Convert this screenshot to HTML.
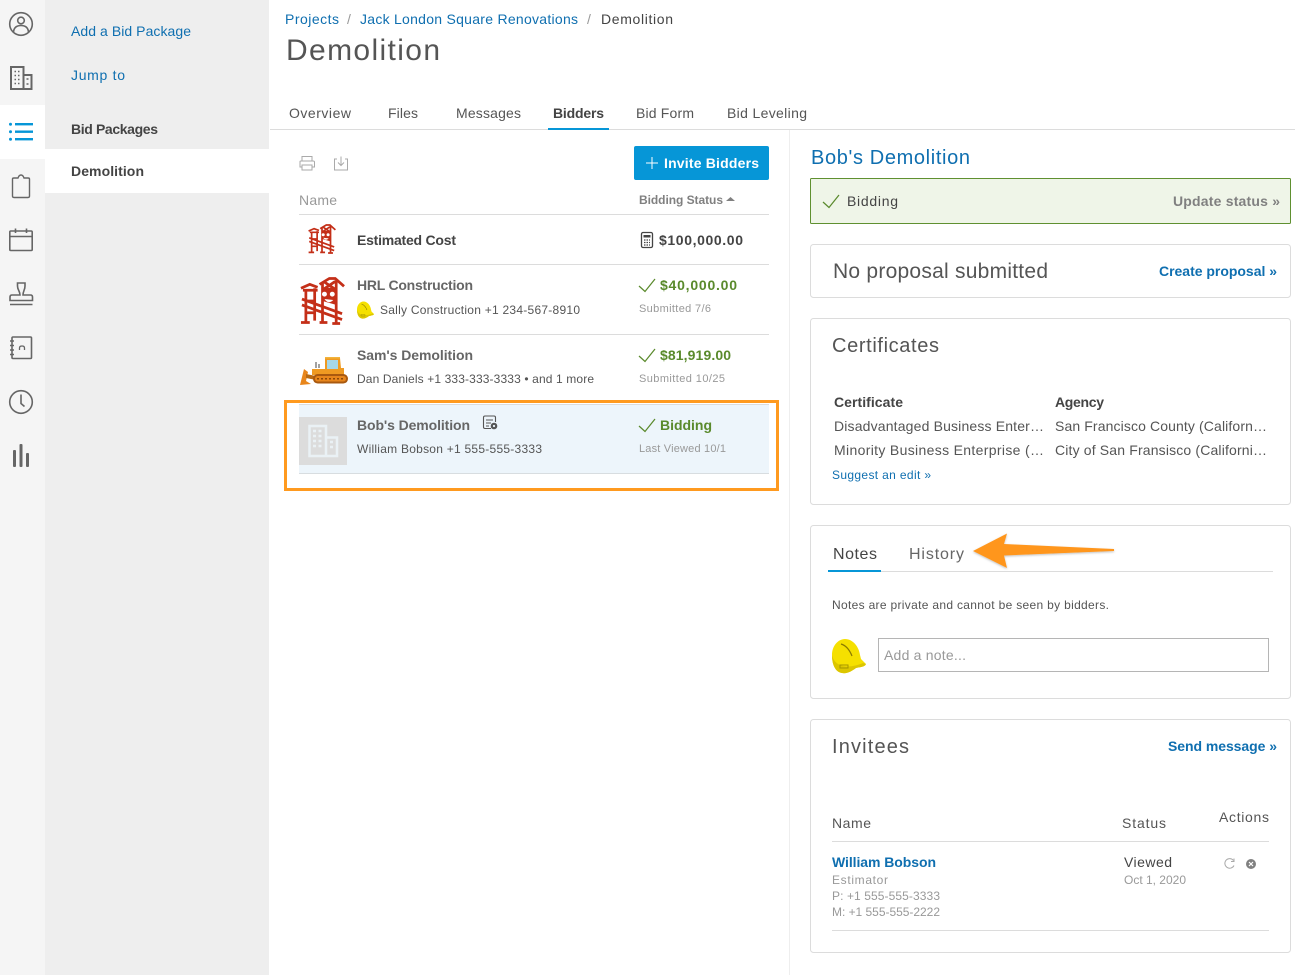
<!DOCTYPE html>
<html lang="en"><head><meta charset="utf-8"><title>Demolition</title>
<style>
html,body{margin:0;padding:0;background:#fff;width:1306px;height:975px;overflow:hidden}
svg{display:block}
text{font-family:"Liberation Sans",sans-serif;font-size:14px;fill:#555}
.b{font-weight:700}
.blue{fill:#0f6fb0}
.s{font-size:12px}
.gr{fill:#999}
.grn{fill:#5a8a2c;font-weight:700}
.ic{fill:none;stroke:#666;stroke-width:1.6}
.ic2{fill:none;stroke:#aaa;stroke-width:1}
.ck{fill:none;stroke:#5a8a2c;stroke-width:1.25}
.card{fill:#fff;stroke:#dcdcdc;stroke-width:1}
.ln{stroke:#dcdcdc;stroke-width:1}
</style></head><body>
<svg width="1306" height="975" viewBox="0 0 1306 975" xmlns="http://www.w3.org/2000/svg">
<defs>
<symbol id="tower" viewBox="0 0 46 48">
<g fill="none" stroke="#c42f18" stroke-width="2.8">
<path d="M1 11 L10 7 L18 10 M3 13 H18 M6 12 V46 M15 11 V44 M6 24 H15 M6 36 H15 M1 46 H10"/>
<path d="M20 7 L30 1 L36 1 L45 9 M23 5 V47 M37 3 V47 M23 12 H37 M24 4 L36 12 M36 4 L24 12 M20 46 H28 M33 47 H41"/>
<path d="M2 22 L43 37 M2 28 L43 43"/>
</g>
<path d="M23 12 H37 V28 L23 24 Z" fill="#c42f18"/>
<circle cx="25" cy="17" r="2.500" fill="#fff"/><circle cx="33" cy="17" r="2.500" fill="#fff"/>
<path d="M25 22 Q29 28 34 23 Z" fill="#fff"/>
</symbol>
<symbol id="helmet" viewBox="0 0 34 36">
<path d="M0 17 C0 8 6 1 13 1 C21 1 27 9 28 17 L29 21 L34 26 C33 29 28 29 24 30 C20 33 15 36 10 35 C3 34 0 26 0 17Z" fill="#f5e000"/>
<path d="M0 17 C0 26 3 34 10 35 C15 36 20 33 24 30 C28 29 33 29 34 26 L31 25 C24 28 14 30 8 27 C3 25 1 21 0 17Z" fill="#dcc600"/>
<path d="M9 6 Q16 8 20 18" fill="none" stroke="#8a7a00" stroke-width="1.200"/>
<path d="M8 27 H16 V30 H8Z" fill="none" stroke="#a59500" stroke-width="1"/>
</symbol>
<filter id="sh" x="-5%" y="-30%" width="110%" height="160%"><feDropShadow dx="0" dy="1" stdDeviation="1" flood-color="#000" flood-opacity=".25"/></filter>
</defs>

<rect x="0" y="0" width="45" height="975" fill="#f5f5f5"/>
<rect x="45" y="0" width="224" height="975" fill="#eeeeee"/>
<rect x="0" y="105" width="45" height="54" fill="#fff"/>
<rect x="45" y="149" width="224" height="44" fill="#fff"/>

<g class="ic">
<circle cx="21" cy="24" r="11.300"/><circle cx="21" cy="20.500" r="3.300"/><path d="M13.500 32 C14 27 17 25.500 21 25.500 C25 25.500 28 27 28.500 32"/>
<path d="M11 89 V67 H23.500 V89 Z M23.500 75 H31.500 V89 H23.500" stroke-width="2"/>
<path d="M14.500 71.500 h1.500 m2 0 h1.500 M14.500 75.500 h1.500 m2 0 h1.500 M14.500 79.500 h1.500 m2 0 h1.500 M14.500 83.500 h1.500 m2 0 h1.500 M26.500 79 h2 M26.500 84 h2"/>
<path d="M12.500 179 Q12.500 178 14 178 H18 Q19 175 21 175 Q23 175 24 178 H28 Q29.500 178 29.500 179 V196 Q29.500 197.500 28 197.500 H14 Q12.500 197.500 12.500 196 Z" stroke-width="1.400"/>
<rect x="9.800" y="231" width="22.400" height="19.500" rx="1"/><path d="M9.800 236.500 H32 M15.500 228.500 V233 M26.500 228.500 V233"/>
<path d="M17.500 283 H25 V286 C25 290 23 291 23 295 H30.500 Q32.500 295 32.500 297 V300.500 H10 V297 Q10 295 12 295 H20 C20 291 17.500 290 17.500 286 Z M10 304.500 H32.500"/>
<rect x="12" y="337" width="19.500" height="21.500" rx="1"/><path d="M10 341 H14 M10 345.500 H14 M10 350 H14 M10 354.500 H14"/><path d="M19.500 350 V348 Q19.500 346 22 346 Q24.500 346 24.500 348 V350" stroke-width="1.300"/>
<circle cx="21" cy="402" r="11.300"/><path d="M21 394.500 V403.500 L24.500 406.500"/>
</g>
<g fill="#666"><rect x="13" y="450" width="3" height="17" rx="1"/><rect x="19.500" y="444" width="3" height="23" rx="1"/><rect x="26" y="453" width="3" height="14" rx="1"/></g>
<g fill="#0696d7"><rect x="15" y="123" width="18" height="2.400"/><rect x="15" y="130.500" width="18" height="2.400"/><rect x="15" y="138" width="18" height="2.400"/><circle cx="10.500" cy="124.200" r="1.500"/><circle cx="10.500" cy="131.700" r="1.500"/><circle cx="10.500" cy="139.200" r="1.500"/></g>

<text x="71" y="36" class="blue" textLength="120">Add a Bid Package</text>
<text x="71" y="80" class="blue" textLength="54">Jump to</text>
<text x="71" y="134" class="b" style="fill:#444" textLength="87">Bid Packages</text>
<text x="71" y="176" class="b" style="fill:#444" textLength="73">Demolition</text>

<text x="285" y="24" class="blue" textLength="54">Projects</text>
<text x="347" y="24" class="gr">/</text>
<text x="360" y="24" class="blue" textLength="218">Jack London Square Renovations</text>
<text x="587" y="24" class="gr">/</text>
<text x="601" y="24" style="fill:#444" textLength="72">Demolition</text>
<text x="286" y="60" style="font-size:30px" textLength="154">Demolition</text>

<text x="289" y="118" textLength="62">Overview</text>
<text x="388" y="118" textLength="30">Files</text>
<text x="456" y="118" textLength="65">Messages</text>
<text x="553" y="118" class="b" style="fill:#444" textLength="51">Bidders</text>
<text x="636" y="118" textLength="58">Bid Form</text>
<text x="727" y="118" textLength="80">Bid Leveling</text>
<line x1="270" y1="129.500" x2="1295" y2="129.500" class="ln"/>
<rect x="548" y="128" width="61" height="2" fill="#0696d7"/>
<line x1="789.500" y1="130" x2="789.500" y2="975" stroke="#eee"/>

<g class="ic2">
<path d="M302 161 V156.500 H312 V161 M302 167 H300 V161.500 Q300 161 301 161 H313 Q314.500 161 314.500 162 V167 H312 M302 165 H312 V170 H302 Z"/>
<path d="M337 159 H334.500 V170 H347.500 V159 H345 M341 156.500 V165.500 M338 162.500 L341 165.500 L344 162.500"/>
</g>
<rect x="634" y="146" width="135" height="34" rx="2" fill="#0696d7"/>
<path d="M652 157 V169 M646 163 H658" stroke="#fff" stroke-width="1"/>
<text x="664" y="168" class="b" style="fill:#fff" textLength="95">Invite Bidders</text>

<text x="299" y="205" class="gr" textLength="38">Name</text>
<text x="639" y="204" class="s b" style="fill:#808080" textLength="84">Bidding Status</text>
<path d="M726 201 L730.500 197 L735 201 Z" fill="#808080"/>
<g class="ln"><line x1="299" y1="214.500" x2="769" y2="214.500"/><line x1="299" y1="264.500" x2="769" y2="264.500"/><line x1="299" y1="334.500" x2="769" y2="334.500"/></g>

<use href="#tower" x="308" y="224" width="28" height="30"/>
<text x="357" y="245" class="b" style="fill:#444" textLength="99">Estimated Cost</text>
<rect x="641.500" y="232.500" width="11" height="15" rx="1.500" fill="none" stroke="#444" stroke-width="1.300"/>
<rect x="643.500" y="235" width="7" height="2.500" fill="#444"/>
<path d="M644 240h1.500m1 0h1.500m1 0h1 M644 242.500h1.500m1 0h1.500m1 0h1 M644 245h1.500m1 0h1.500m1 0h1" stroke="#444" stroke-width="1.200"/>
<text x="659" y="245" class="b" style="fill:#444" textLength="84">$100,000.00</text>

<use href="#tower" x="300" y="277" width="45" height="48"/>
<text x="357" y="290" class="b" style="fill:#666" textLength="116">HRL Construction</text>
<use href="#helmet" x="357" y="301" width="17" height="18"/>
<text x="380" y="314" class="s" textLength="200">Sally Construction +1 234-567-8910</text>
<path class="ck" d="M639 286 L645 291.500 L655 279"/>
<text x="660" y="290" class="grn" textLength="77">$40,000.00</text>
<text x="639" y="312" class="gr" style="font-size:11px" textLength="72">Submitted 7/6</text>

<g>
<path d="M300 385 L304 369 L308 372 L306 381 L311 384 Z" fill="#e8861c"/>
<path d="M306 374 L316 376 V380 L306 378Z" fill="#b96a12"/>
<path d="M312 369 H325 V358 H340 L341 368 H344 V375 H312 Z" fill="#ef9a22"/>
<rect x="327" y="360" width="11" height="9" fill="#a6d7e8"/>
<rect x="325" y="357" width="15" height="1.500" fill="#f2b43c"/>
<path d="M316 368 V362 M319 368 V364" stroke="#444" stroke-width="1"/>
<rect x="313" y="374" width="35" height="9.500" rx="4.700" fill="#a9590f"/>
<rect x="315" y="376" width="31" height="5.500" rx="2.700" fill="#e8861c"/>
<path d="M317 378.700 H345" stroke="#8a4708" stroke-width="1.500" stroke-dasharray="2 2"/>
</g>
<text x="357" y="360" class="b" style="fill:#666" textLength="116">Sam's Demolition</text>
<text x="357" y="383" class="s" textLength="237">Dan Daniels +1 333-333-3333 • and 1 more</text>
<path class="ck" d="M639 356 L645 361.500 L655 349"/>
<text x="660" y="360" class="grn" textLength="71">$81,919.00</text>
<text x="639" y="382" class="gr" style="font-size:11px" textLength="86">Submitted 10/25</text>

<rect x="299" y="404" width="470" height="69" fill="#edf5fb"/>
<line x1="299" y1="404.500" x2="769" y2="404.500" class="ln"/>
<line x1="299" y1="473.500" x2="769" y2="473.500" stroke="#d8dde0"/>
<rect x="299" y="417" width="48" height="48" fill="#dcdcdc"/>
<path d="M309.500 456 V426 H326 V456 Z M326 437.500 H337 V456 H326" fill="none" stroke="#eaf1f5" stroke-width="2.500"/>
<path d="M313 431h3m2.500 0h3 M313 436h3m2.500 0h3 M313 441h3m2.500 0h3 M313 446h3m2.500 0h3 M330 442h3 M330 447h3" stroke="#eaf1f5" stroke-width="2.500"/>
<text x="357" y="430" class="b" style="fill:#666" textLength="113">Bob's Demolition</text>
<path d="M491 428.500 H485 Q483.500 428.500 483.500 427 V417.500 Q483.500 416 485 416 H494 Q495.500 416 495.500 417.500 V422 M486 420 H493 M486 423 H491 M486 426 H489" fill="none" stroke="#555" stroke-width="1.100"/>
<circle cx="494" cy="426" r="3.300" fill="#555"/><circle cx="494" cy="426" r="1.100" fill="#edf5fb"/>
<text x="357" y="453" class="s" textLength="185">William Bobson +1 555-555-3333</text>
<path class="ck" d="M639 426 L645 431.500 L655 419"/>
<text x="660" y="430" class="grn" textLength="52">Bidding</text>
<text x="639" y="452" class="gr" style="font-size:11px" textLength="87">Last Viewed 10/1</text>
<rect x="285.500" y="401.500" width="492" height="88" fill="none" stroke="#ff9a1f" stroke-width="3"/>

<text x="811" y="164" class="blue" style="font-size:20px" textLength="159">Bob's Demolition</text>
<rect x="810.500" y="178.500" width="480" height="45" rx="1" fill="#eff5e8" stroke="#5f9030"/>
<path class="ck" d="M823 202 L829 207.500 L839 195"/>
<text x="847" y="206" style="fill:#444" textLength="51">Bidding</text>
<text x="1173" y="206" class="b" style="fill:#808080" textLength="107">Update status »</text>

<rect x="810.500" y="244.500" width="480" height="53" rx="3" class="card"/>
<text x="833" y="278" style="font-size:21px" textLength="215">No proposal submitted</text>
<text x="1159" y="276" class="b blue" textLength="118">Create proposal »</text>

<rect x="810.500" y="318.500" width="480" height="186" rx="3" class="card"/>
<text x="832" y="352" style="font-size:20px" textLength="107">Certificates</text>
<text x="834" y="407" class="b" style="fill:#444" textLength="69">Certificate</text>
<text x="1055" y="407" class="b" style="fill:#444" textLength="49">Agency</text>
<text x="834" y="431" textLength="210">Disadvantaged Business Enter…</text>
<text x="1055" y="431" textLength="212">San Francisco County (Californ…</text>
<text x="834" y="455" textLength="210">Minority Business Enterprise (…</text>
<text x="1055" y="455" textLength="212">City of San Fransisco (Californi…</text>
<text x="832" y="479" class="s blue" textLength="99">Suggest an edit »</text>

<rect x="810.500" y="525.500" width="480" height="173" rx="3" class="card"/>
<text x="833" y="559" style="font-size:16px;fill:#444" textLength="44">Notes</text>
<text x="909" y="559" style="font-size:16px;fill:#666" textLength="55">History</text>
<line x1="828" y1="571.500" x2="1273" y2="571.500" class="ln"/>
<rect x="828" y="570" width="53" height="2" fill="#0696d7"/>
<path d="M973 551 L1007 533.500 L1004 544 L1114 549 L1114 551 L1004 555.500 L1007 568 Z" fill="#ff961f" filter="url(#sh)"/>
<text x="832" y="609" class="s" textLength="277">Notes are private and cannot be seen by bidders.</text>
<use href="#helmet" x="832" y="638" width="34" height="36"/>
<rect x="878.500" y="638.500" width="390" height="33" fill="#fff" stroke="#b5b5b5"/>
<text x="884" y="660" class="gr" textLength="82">Add a note...</text>

<rect x="810.500" y="719.500" width="480" height="233" rx="3" class="card"/>
<text x="832" y="753" style="font-size:20px" textLength="77">Invitees</text>
<text x="1168" y="751" class="b blue" textLength="109">Send message »</text>
<text x="832" y="828" textLength="39">Name</text>
<text x="1122" y="828" textLength="44">Status</text>
<text x="1219" y="822" textLength="50">Actions</text>
<line x1="832" y1="841.500" x2="1269" y2="841.500" class="ln"/>
<text x="832" y="867" class="b blue" textLength="104">William Bobson</text>
<text x="832" y="884" class="s gr" textLength="56">Estimator</text>
<text x="832" y="900" class="s gr" textLength="108">P: +1 555-555-3333</text>
<text x="832" y="916" class="s gr" textLength="108">M: +1 555-555-2222</text>
<text x="1124" y="867" style="fill:#444" textLength="48">Viewed</text>
<text x="1124" y="884" class="s gr" textLength="62">Oct 1, 2020</text>
<path d="M1233.500 860.500 A4.800 4.800 0 1 0 1234 865.500 M1234 858.500 V861.500 H1231" fill="none" stroke="#aaa" stroke-width="1"/>
<circle cx="1251" cy="864" r="5" fill="#808080"/>
<path d="M1249 862 L1253 866 M1253 862 L1249 866" stroke="#fff" stroke-width="1.200"/>
<line x1="832" y1="930.500" x2="1269" y2="930.500" class="ln"/>
</svg>
</body></html>
